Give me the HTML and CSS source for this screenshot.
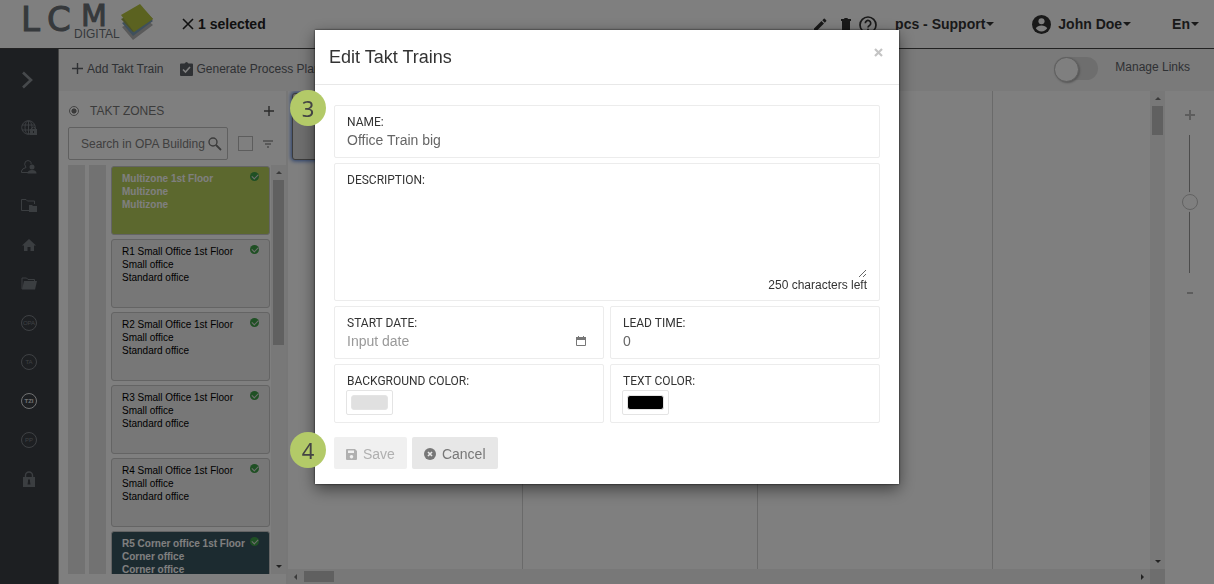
FILE: index.html
```
<!DOCTYPE html>
<html lang="en">
<head>
    <meta charset="UTF-8">
    <title>LCM Digital - Edit Takt Trains</title>
    <meta name="viewport" content="width=device-width, initial-scale=1.0">
    <link rel="stylesheet" href="styles.css">
</head>
<body>

<div class="app">
    <header class="topbar">
        <a href="#" class="logo" aria-label="LCM Digital">
            <svg width="134" height="44" viewBox="0 0 134 44">
                <path d="M101 25L122 14L132 23L112 38Z" fill="#b4b4b4"/>
                <path d="M101 21L122 10L132 19L112 34Z" fill="#7fa0b8"/>
                <path d="M100 17L122 7L132 17L112 30Z" fill="#98a44a"/>
                <path d="M100 13L119 2L132 17L113 30Z" fill="#b6c440"/>
                <text x="0" y="29" class="logo-main">L</text>
                <text x="26" y="29" class="logo-main">C</text>
                <text x="60" y="24" class="logo-m">M</text>
                <text x="53" y="36" class="logo-sub">DIGITAL</text>
            </svg>
        </a>
        <button class="link-btn selected">
            <svg width="12" height="12" viewBox="0 0 12 12"><path d="M1 1L11 11M11 1L1 11" stroke="#222" stroke-width="1.6"/></svg>
            1 selected
        </button>
        <div class="tools">
            <button class="icon-btn" aria-label="Edit"><svg width="14" height="14" viewBox="0 0 14 14"><path d="M1 10.5V13h2.500L11 5.500 8.500 3zM9.300 2.200L10.800.8q.5-.5 1 0l1.400 1.400q.5.5 0 1L11.800 4.700z"/></svg></button>
            <button class="icon-btn" aria-label="Delete"><svg width="10" height="14" viewBox="0 0 10 14"><path d="M0 1h3l.6-1h2.800l.6 1h3v2H0zM1 3h8v10q0 1-1 1H2q-1 0-1-1z"/></svg></button>
            <button class="icon-btn" aria-label="Help"><svg width="18" height="18" viewBox="0 0 18 18" fill="none" stroke="#333" stroke-width="1.700"><circle cx="9" cy="9" r="8"/><path d="M6.300 7.200a2.700 2.700 0 1 1 4.500 2Q9 10.300 9 11.500M9 12.700v1.600"/></svg></button>
        </div>
        <button class="link-btn project">pcs - Support<i class="caret"></i></button>
        <button class="link-btn user">
            <svg width="19" height="19" viewBox="0 0 20 20"><circle cx="10" cy="10" r="10" fill="#333"/><circle cx="10" cy="6.500" r="3.200" fill="#fff"/><path d="M4 14q2-3 6-3t6 3q-2 3.300-6 3.300T4 14z" fill="#fff"/></svg>
            John Doe<i class="caret"></i>
        </button>
        <button class="link-btn lang">En<i class="caret"></i></button>
    </header>

    <div class="body">
        <nav class="sidebar">
            <a href="#" class="expand" aria-label="Expand"><svg width="11" height="18" viewBox="0 0 11 18"><path d="M1 1.500L9 9L1 16.500" fill="none" stroke="#8d9298" stroke-width="2.600"/></svg></a>
            <a href="#" aria-label="Global rights"><svg width="16" height="16" viewBox="0 0 16 16"><g fill="none" stroke="#777c83"><circle cx="7.500" cy="7.500" r="6.800"/><ellipse cx="7.500" cy="7.500" rx="3.500" ry="6.800"/><path d="M1 5h13M1 10h13M7.500 1v13"/></g><path d="M9 9h7v6H9z" fill="#777c83"/><path d="M10.500 9V8q2-2 4 0v1" fill="none" stroke="#777c83"/><path d="M12 11h1v2h-1z" fill="#3b3f45"/></svg></a>
            <a href="#" aria-label="Users"><svg width="16" height="14" viewBox="0 0 16 14"><path d="M8 12.500H.5V11Q1 8.500 5 7.500Q2.500 4 4.500 1.500Q7-.5 9.500 1.500Q10.500 3 10 4" fill="none" stroke="#777c83"/><circle cx="11" cy="7" r="2.500" fill="#777c83"/><path d="M6.500 13.500Q6.500 10 11 10t4.500 3.500z" fill="#777c83"/></svg></a>
            <a href="#" aria-label="Shared folders"><svg width="16" height="13" viewBox="0 0 16 13"><path d="M8 11.500H.5V.5H5L6.500 2H13.500V5" fill="none" stroke="#777c83"/><path d="M8 6h3l1 1h4v6H8z" fill="#777c83"/></svg></a>
            <a href="#" aria-label="Home"><svg width="14" height="12" viewBox="0 0 14 12"><path d="M7 0L14 6.500H12V12H8.500V8H5.500V12H2V6.500H0z" fill="#777c83"/></svg></a>
            <a href="#" aria-label="Projects"><svg width="16" height="13" viewBox="0 0 16 13"><path d="M1 12V1H5.500L7 2.500H13.500V4" fill="none" stroke="#777c83"/><path d="M3 4H16L14 12.500H1z" fill="#777c83"/></svg></a>
            <a href="#"><span class="ring">OPA</span></a>
            <a href="#"><span class="ring">TA</span></a>
            <a href="#" class="active"><span class="ring">TZI</span></a>
            <a href="#"><span class="ring">PP</span></a>
            <a href="#" aria-label="Locked"><svg width="12" height="16" viewBox="0 0 12 16"><path d="M2.500 7V4.500a3.500 3.500 0 0 1 7 0V7" fill="none" stroke="#777c83" stroke-width="1.400"/><path d="M0 6h12v10H0z" fill="#777c83"/><path d="M5 8.500h2v2l.5 3h-3l.5-3z" fill="#3b3f45"/></svg></a>
        </nav>

        <div class="content">
            <div class="toolbar">
                <button class="tool"><svg width="11" height="11" viewBox="0 0 11 11"><path d="M5.500 0V11M0 5.500H11" stroke="#5e6268" stroke-width="1.400"/></svg>Add Takt Train</button>
                <button class="tool"><svg width="13" height="14" viewBox="0 0 13 14"><path d="M1 1.500h3.500q2-3 4 0H12q1 0 1 1V13q0 1-1 1H1q-1 0-1-1V2.500q0-1 1-1z" fill="#5e6268"/><path d="M3 7.500L5.500 10L10 5" fill="none" stroke="#fff" stroke-width="1.600"/></svg>Generate Process Plan</button>
                <label class="links"><input type="checkbox" class="switch"><span>Manage Links</span></label>
            </div>

            <div class="workspace">
                <section class="zones">
                    <div class="zones-head">
                        <input type="radio" id="zonesRadio" class="radio" checked>
                        <label for="zonesRadio">TAKT ZONES</label>
                        <button class="icon-btn" aria-label="Add zone"><svg width="10" height="10" viewBox="0 0 10 10"><path d="M5 0V10M0 5H10" stroke="#555" stroke-width="1.400"/></svg></button>
                    </div>
                    <div class="zones-search">
                        <div class="search">
                            <input type="text" placeholder="Search in OPA Building" aria-label="Search in OPA Building">
                            <svg width="14" height="14" viewBox="0 0 14 14" fill="none" stroke="#777"><circle cx="5" cy="5" r="4" stroke-width="1.400"/><path d="M8 8L13 13" stroke-width="1.800"/></svg>
                        </div>
                        <input type="checkbox" class="check" aria-label="Select all">
                        <button class="icon-btn" aria-label="Filter"><svg width="10" height="8" viewBox="0 0 10 8"><path d="M0 1H10M2 4H8M4 7H6" stroke="#666" stroke-width="1.200"/></svg></button>
                    </div>
                    <div class="zones-list">
                        <div class="level"></div>
                        <div class="level"></div>
                        <div class="cards">
                            <article class="card green"><i class="ok"></i>Multizone 1st Floor<br>Multizone<br>Multizone</article>
                            <article class="card"><i class="ok"></i>R1 Small Office 1st Floor<br>Small office<br>Standard office</article>
                            <article class="card"><i class="ok"></i>R2 Small Office 1st Floor<br>Small office<br>Standard office</article>
                            <article class="card"><i class="ok"></i>R3 Small Office 1st Floor<br>Small office<br>Standard office</article>
                            <article class="card"><i class="ok"></i>R4 Small Office 1st Floor<br>Small office<br>Standard office</article>
                            <article class="card teal"><i class="ok"></i>R5 Corner office 1st Floor<br>Corner office<br>Corner office</article>
                        </div>
                        <div class="vbar"><i class="up"></i><span class="thumb long"></span><i class="down"></i></div>
                    </div>
                </section>

                <section class="chart">
                    <div class="chart-main">
                        <div class="columns">
                            <div class="column"><div class="train"></div></div>
                            <div class="column"></div>
                            <div class="column"></div>
                            <div class="column"></div>
                        </div>
                        <div class="vbar"><i class="up"></i><span class="thumb"></span><i class="down"></i></div>
                    </div>
                    <div class="hbar"><i class="left"></i><span class="hthumb"></span><i class="right"></i><span class="corner"></span></div>
                </section>

                <aside class="zoom">
                    <button class="icon-btn" aria-label="Zoom in"><svg width="10" height="10" viewBox="0 0 10 10"><path d="M5 0V10M0 5H10" stroke="#bbb" stroke-width="2"/></svg></button>
                    <input type="range" value="48" aria-label="Zoom">
                    <button class="icon-btn" aria-label="Zoom out"><svg width="10" height="10" viewBox="0 0 10 10"><path d="M2 5H8" stroke="#bbb" stroke-width="2"/></svg></button>
                </aside>
            </div>
        </div>
    </div>
</div>

<div class="backdrop">
    <div class="modal" role="dialog" aria-labelledby="modalTitle">
        <span class="step step-3">3</span>
        <span class="step step-4">4</span>
        <div class="modal-head">
            <h4 id="modalTitle">Edit Takt Trains</h4>
            <button class="icon-btn" aria-label="Close"><svg width="9" height="9" viewBox="0 0 9 9"><path d="M1 1L8 8M8 1L1 8" stroke="#c4c4c4" stroke-width="2.200"/></svg></button>
        </div>
        <form class="modal-body">
            <div class="field wide">
                <label for="name">NAME:</label>
                <input type="text" id="name" value="Office Train big">
            </div>
            <div class="field wide">
                <label for="description">DESCRIPTION:</label>
                <textarea id="description"></textarea>
                <div class="count">250 characters left</div>
            </div>
            <div class="field">
                <label for="startDate">START DATE:</label>
                <div class="date">
                    <input type="text" id="startDate" placeholder="Input date">
                    <button type="button" class="icon-btn" aria-label="Pick date"><svg width="10" height="10" viewBox="0 0 10 10"><path d="M.5 1.500H9.500V9.500H.5z" fill="none" stroke="#777"/><path d="M0 1h10v3H0zM2 0h1v1H2zM7 0h1v1H7z" fill="#777"/></svg></button>
                </div>
            </div>
            <div class="field">
                <label for="leadTime">LEAD TIME:</label>
                <input type="text" id="leadTime" value="0">
            </div>
            <div class="field">
                <label for="bgColor">BACKGROUND COLOR:</label>
                <input type="color" id="bgColor" value="#e0e0e0">
            </div>
            <div class="field">
                <label for="textColor">TEXT COLOR:</label>
                <input type="color" id="textColor" value="#000000">
            </div>
            <div class="actions">
                <button type="submit" class="btn" disabled><svg width="11" height="11" viewBox="0 0 11 11"><path d="M1 0h8l2 2v8q0 1-1 1H1q-1 0-1-1V1q0-1 1-1zM2 1.500v2.500h6V1.500zM5.500 6a1.700 1.700 0 1 0 .01 0z" fill="#b0b0b0" fill-rule="evenodd"/></svg>Save</button>
                <button type="button" class="btn"><svg width="12" height="12" viewBox="0 0 12 12"><circle cx="6" cy="6" r="6" fill="#777"/><path d="M4 4L8 8M8 4L4 8" stroke="#e8e8e8" stroke-width="1.600"/></svg>Cancel</button>
            </div>
        </form>
    </div>
</div>

</body>
</html>
```
FILE: styles.css
```
* {
    box-sizing: border-box;
}

body {
    margin: 0;
    font-family: "Liberation Sans", Arial, sans-serif;
    font-size: 12px;
    color: #333;
    background: #fff;
}

button,
input,
textarea {
    font: inherit;
    color: inherit;
    margin: 0;
    padding: 0;
    border: none;
    background: none;
    outline: none;
}

button {
    cursor: pointer;
}

svg {
    display: block;
    flex: none;
}

.app {
    display: flex;
    flex-direction: column;
    height: 100vh;
    overflow: hidden;
}

/* top bar */
.topbar {
    display: flex;
    align-items: center;
    flex: none;
    height: 49px;
    padding: 0 14px 0 21px;
    border-bottom: 1px solid #444;
}

.logo-main,
.logo-m {
    font-family: "DejaVu Sans", sans-serif;
    font-size: 34px;
    fill: #6c7278;
    stroke: #6c7278;
}

.logo-m {
    font-size: 30px;
}

.logo-sub {
    font-size: 12px;
    fill: #6c7278;
}

.link-btn {
    display: flex;
    align-items: center;
    gap: 4px;
    font-size: 14px;
    font-weight: bold;
    white-space: nowrap;
}

.link-btn.selected {
    margin-left: 27px;
    color: #222;
}

.icon-btn {
    display: flex;
    align-items: center;
    justify-content: center;
}

.tools {
    display: flex;
    align-items: center;
    gap: 14px;
    margin-left: auto;
    padding-top: 2px;
    fill: #333;
}

.tools .icon-btn:last-child {
    margin-left: -6px;
}

.project {
    margin-left: 18px;
}

.user {
    margin-left: 37px;
}

.user svg {
    margin-right: 3px;
}

.lang {
    margin-left: 40px;
}

.caret {
    border: 4px solid transparent;
    border-top-color: #333;
    border-bottom: none;
    margin-left: -3px;
    margin-right: 1px;
}

.body {
    display: flex;
    flex: 1;
    min-height: 0;
}

/* sidebar */
.sidebar {
    display: flex;
    flex-direction: column;
    flex: none;
    width: 59px;
    background: #3b3f45;
    border-right: 1px solid #8a8a8a;
}

.sidebar a {
    display: flex;
    align-items: center;
    justify-content: center;
    height: 39px;
    color: #7d8288;
    text-decoration: none;
}

.sidebar .expand {
    height: 59px;
    padding-right: 4px;
    padding-top: 2px;
}

.ring {
    display: flex;
    align-items: center;
    justify-content: center;
    width: 16px;
    height: 16px;
    border: 1px solid;
    border-radius: 50%;
    font-size: 6px;
}

.sidebar .active {
    color: #e0e2e4;
    font-weight: bold;
}

.content {
    display: flex;
    flex-direction: column;
    flex: 1;
    min-width: 0;
}

/* toolbar */
.toolbar {
    display: flex;
    align-items: center;
    gap: 16px;
    flex: none;
    height: 42px;
    padding: 0 24px 3px 13px;
    background: #f4f4f4;
}

.tool {
    display: flex;
    align-items: center;
    gap: 4px;
    color: #5e6268;
    white-space: nowrap;
}

.links {
    display: flex;
    align-items: center;
    gap: 17px;
    margin-left: auto;
    color: #5e6268;
}

.links span {
    padding-bottom: 3px;
}

.switch {
    appearance: none;
    width: 44px;
    height: 23px;
    border-radius: 12px;
    background: #dcdcdc;
}

.switch::before {
    content: "";
    display: block;
    width: 23px;
    height: 23px;
    border: 1px solid #bbb;
    border-radius: 50%;
    background: #fff;
    box-shadow: 1px 1px 2px #aaa;
}

.workspace {
    display: flex;
    flex: 1;
    min-height: 0;
}

/* takt zones */
.zones {
    display: flex;
    flex-direction: column;
    flex: none;
    width: 229px;
    padding: 0 0 10px 9px;
    border-right: 2px solid #efefef;
}

.zones-head {
    display: flex;
    align-items: center;
    height: 36px;
    padding-top: 3px;
    color: #777;
}

.radio {
    appearance: none;
    width: 10px;
    height: 10px;
    margin: 0 11px 0 1px;
    border: 1px solid #888;
    border-radius: 50%;
    background: radial-gradient(#777 40%, transparent 50%);
}

.zones-head .icon-btn {
    margin: 0 12px 0 auto;
}

.zones-search {
    display: flex;
    align-items: center;
    gap: 10px;
    height: 33px;
}

.search {
    display: flex;
    align-items: center;
    width: 160px;
    height: 33px;
    padding: 0 6px 0 12px;
    border: 1px solid #c0c0c0;
    border-radius: 2px;
}

.search input {
    width: 127px;
}

::placeholder {
    color: #808080;
}

.check {
    appearance: none;
    width: 15px;
    height: 15px;
    border: 1px solid #bbb;
}

.zones-list {
    display: flex;
    flex: 1;
    min-height: 0;
    margin-top: 5px;
    overflow: hidden;
}

.level {
    flex: none;
    width: 17px;
    margin-right: 4px;
    background: #e4e4e4;
}

.cards {
    display: flex;
    flex-direction: column;
    gap: 4px;
    flex: 1;
    padding: 1px 1px 0;
    overflow: hidden;
}

.card {
    position: relative;
    flex: none;
    height: 69px;
    padding: 5px 10px;
    border: 1px solid #c8c8c8;
    border-radius: 3px;
    background: #eee;
    color: #000;
    font-size: 10px;
    line-height: 13px;
    white-space: nowrap;
}

.card.green {
    background: #b8d05c;
    color: #fff;
    font-weight: bold;
}

.card.teal {
    background: #385660;
    color: #fff;
    font-weight: bold;
}

.ok {
    position: absolute;
    top: 5px;
    right: 10px;
    width: 9px;
    height: 9px;
    border-radius: 50%;
    background: #3fa048;
}

.ok::after {
    content: "";
    display: block;
    width: 5px;
    height: 3px;
    margin: 2px;
    border: solid #ddd;
    border-width: 0 0 1px 1px;
    transform: rotate(-45deg);
}

/* scroll bars */
.vbar {
    display: flex;
    flex-direction: column;
    align-items: center;
    flex: none;
    width: 15px;
    padding: 6px 0;
    background: #f1f1f1;
}

.up,
.down,
.left,
.right {
    border: 3px solid transparent;
}

.up {
    border-top: none;
    border-bottom-color: #777;
}

.down {
    margin-top: auto;
    border-bottom: none;
    border-top-color: #444;
}

.left {
    border-left: none;
    border-right-color: #777;
}

.right {
    margin-left: auto;
    border-right: none;
    border-left-color: #444;
}

.thumb {
    width: 11px;
    height: 29px;
    margin-top: 6px;
    background: #c1c1c1;
}

.thumb.long {
    height: 165px;
}

.hbar {
    display: flex;
    align-items: center;
    flex: none;
    height: 15px;
    padding-left: 6px;
    background: #f1f1f1;
}

.hthumb {
    width: 30px;
    height: 11px;
    margin-left: 7px;
    background: #c1c1c1;
}

.corner {
    width: 15px;
    height: 15px;
    margin-left: 6px;
    background: #dcdcdc;
}

/* chart */
.chart {
    display: flex;
    flex-direction: column;
    flex: 1;
    min-width: 0;
}

.chart-main {
    display: flex;
    flex: 1;
    min-height: 0;
}

.columns {
    display: flex;
    flex: 1;
    min-width: 0;
    overflow: hidden;
}

.column {
    flex: none;
    width: 235px;
    padding: 2px 4px;
    border-right: 1px solid #d4d4d4;
}

.train {
    height: 67px;
    border: 1px solid #777;
    border-radius: 3px;
    background: #dcdcdc;
    box-shadow: 0 0 4px 1px #4a7ad8;
}

/* zoom */
.zoom {
    display: flex;
    flex-direction: column;
    align-items: center;
    flex: none;
    width: 49px;
    padding-top: 19px;
}

.zoom input {
    appearance: none;
    writing-mode: vertical-lr;
    width: 16px;
    height: 138px;
    margin: 15px 0;
}

.zoom input::-webkit-slider-runnable-track {
    width: 16px;
    background: linear-gradient(#999, #999) center / 1px 100% no-repeat;
}

.zoom input::-webkit-slider-thumb {
    appearance: none;
    width: 16px;
    height: 16px;
    border: 1px solid #c4c4c4;
    border-radius: 50%;
    background: #fff;
    box-shadow: 0 0 0 2px #fff;
}

/* modal */
.backdrop {
    position: fixed;
    inset: 0;
    padding: 30px 0;
    background: rgba(0, 0, 0, 0.5);
}

.modal {
    position: relative;
    width: 584px;
    max-width: 100%;
    margin: 0 auto;
    background: #fff;
    box-shadow: 0 5px 15px rgba(0, 0, 0, 0.5), 0 0 2px rgba(0, 0, 0, 0.8);
}

.modal-head {
    display: flex;
    justify-content: space-between;
    height: 55px;
    padding: 17px 16px 0 14px;
    border-bottom: 1px solid #e8e8e8;
}

.modal-head h4 {
    margin: 0;
    font-size: 18px;
    font-weight: normal;
    line-height: 21px;
}

.modal-head .icon-btn {
    height: 11px;
}

.modal-body {
    display: grid;
    grid-template-columns: 1fr 1fr;
    gap: 5px 6px;
    padding: 20px 19px 15px;
}

.field {
    display: flex;
    flex-direction: column;
    padding: 8px 12px 7px;
    border: 1px solid #ececec;
    border-radius: 2px;
}

.field.wide,
.actions {
    grid-column: 1 / -1;
}

.field label {
    font-family: Roboto, sans-serif;
    line-height: 16px;
}

.field input[type="text"] {
    width: 100%;
    height: 20px;
    color: #666;
    font-size: 14px;
}

.field ::placeholder {
    color: #999;
}

.field textarea {
    height: 90px;
    resize: both;
}

.count {
    line-height: 15px;
    text-align: right;
}

.date {
    display: flex;
    padding-right: 5px;
}

.field input[type="color"] {
    width: 47px;
    height: 25px;
    margin-top: 1px;
    margin-left: -1px;
    padding: 4px;
    border: 1px solid #e4e4e4;
    border-radius: 2px;
}

::-webkit-color-swatch-wrapper {
    padding: 0;
}

::-webkit-color-swatch {
    border: 1px solid #e4e4e4;
    border-radius: 3px;
}

.actions {
    display: flex;
    gap: 5px;
    margin-top: 9px;
}

.btn {
    display: flex;
    align-items: center;
    gap: 6px;
    height: 32px;
    padding: 2px 12px 0;
    border-radius: 2px;
    background: #e7e7e7;
    color: #777;
    font-size: 14px;
}

.btn:disabled {
    background: #f0f0f0;
    color: #b0b0b0;
}

.step {
    position: absolute;
    left: -25px;
    width: 36px;
    height: 36px;
    border-radius: 50%;
    background: #b3ca68;
    color: #444;
    font-family: "Noto Sans", sans-serif;
    font-size: 22px;
    line-height: 36px;
    text-align: center;
}

.step-3 {
    top: 60px;
}

.step-4 {
    bottom: 16px;
}
```
